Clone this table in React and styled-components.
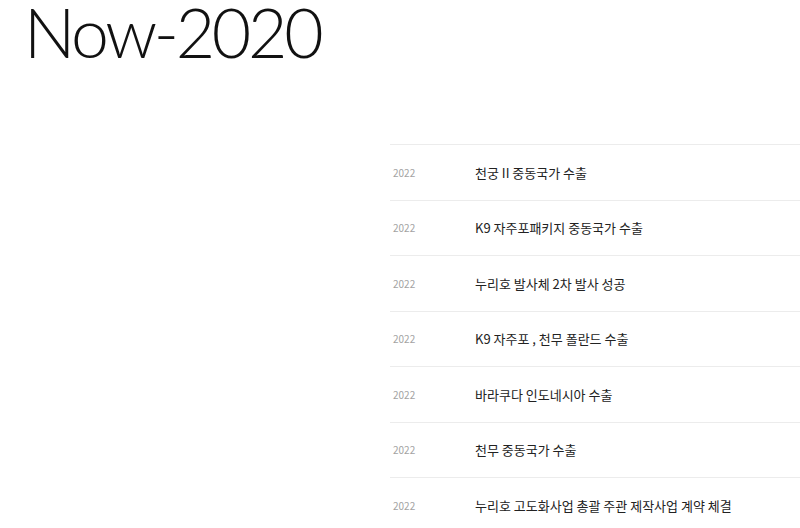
import styled, { createGlobalStyle } from "styled-components";

const GlobalStyle = createGlobalStyle`
  body {
    margin: 0;
    background: #fff;
    font-family: "Noto Sans CJK KR", "Noto Sans", sans-serif;
  }
`;

const Page = styled.div`
  width: 800px;
  height: 528px;
  overflow: hidden;
`;

const Header = styled.header`
  height: 144px;
  padding-left: 24px;
`;

const Title = styled.h1`
  margin: 0;
  font-family: Lato, "Noto Sans", sans-serif;
  font-weight: 300;
  font-size: 68px;
  line-height: 64px;
  letter-spacing: -3.3px;
  color: #111;
`;

const List = styled.ul`
  list-style: none;
  margin: 0 0 0 390px;
  padding: 0;
`;

const Row = styled.li`
  display: flex;
  align-items: center;
  height: 54.5px;
  border-top: 1px solid #ececec;
`;

const Year = styled.span`
  width: 82px;
  padding-left: 3px;
  font-size: 10px;
  color: #a3a3a3;
`;

const Label = styled.span`
  font-size: 13px;
  color: #222;
`;

const items = [
  "천궁 II 중동국가 수출",
  "K9 자주포패키지 중동국가 수출",
  "누리호 발사체 2차 발사 성공",
  "K9 자주포 , 천무 폴란드 수출",
  "바라쿠다 인도네시아 수출",
  "천무 중동국가 수출",
  "누리호 고도화사업 총괄 주관 제작사업 계약 체결",
];

export default function App() {
  return (
    <Page>
      <GlobalStyle />
      <Header>
        <Title>Now-2020</Title>
      </Header>
      <List>
        {items.map((item, i) => (
          <Row key={i}>
            <Year>2022</Year>
            <Label>{item}</Label>
          </Row>
        ))}
      </List>
    </Page>
  );
}
